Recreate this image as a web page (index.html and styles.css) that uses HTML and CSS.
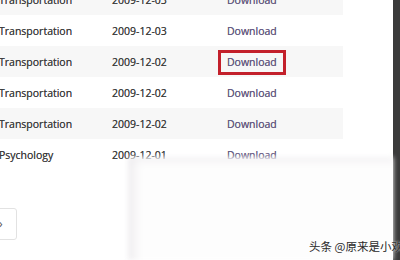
FILE: index.html
```html
<!DOCTYPE html>
<html>
<head>
<meta charset="utf-8">
<link rel="stylesheet" href="styles.css">
</head>
<body>
<div class="page">
  <div class="main">
    <table class="list">
      <tr class="alt"><td class="c1">Transportation</td><td class="c2">2009-12-03</td><td class="c3"><a>Download</a></td></tr>
      <tr><td class="c1">Transportation</td><td class="c2">2009-12-03</td><td class="c3"><a>Download</a></td></tr>
      <tr class="alt"><td class="c1">Transportation</td><td class="c2">2009-12-02</td><td class="c3"><a class="hl">Download</a></td></tr>
      <tr><td class="c1">Transportation</td><td class="c2">2009-12-02</td><td class="c3"><a>Download</a></td></tr>
      <tr class="alt"><td class="c1">Transportation</td><td class="c2">2009-12-02</td><td class="c3"><a>Download</a></td></tr>
      <tr><td class="c1">Psychology</td><td class="c2">2009-12-01</td><td class="c3"><a>Download</a></td></tr>
    </table>
    <div class="pager"><span class="pbtn">›</span></div>
  </div>
  <div class="sidebar"></div>
</div>
<div class="smudge"></div>
<div class="mark">头条 @原来是小欢</div>
</body>
</html>
```
FILE: styles.css
```css
html, body {
  margin: 0;
  padding: 0;
  width: 400px;
  height: 260px;
  overflow: hidden;
  background: #fff;
  font-family: "Open Sans", "Noto Sans", sans-serif;
}
.page {
  display: flex;
  height: 260px;
}
.main {
  flex: 1;
  margin-top: -16px;
  overflow: hidden;
}
.sidebar {
  width: 7px;
  background: #3b3b3b;
}
.list {
  border-collapse: collapse;
  width: 344px;
  margin-left: -1px;
  font-size: 10.5px;
  color: #3a3a3a;
  text-shadow: 0 0 0.3px #666;
}
.list td {
  height: 31px;
  padding: 0;
  vertical-align: middle;
}
.list tr.alt td {
  background: #f7f7f7;
}
.c1 { width: 113px; }
.c2 { width: 115px; }
.c3 a {
  color: #67598a;
}
.c3 a.hl {
  display: inline-block;
  padding: 2px 6px 3px 6px;
  margin: -5px -9px -6px -9px;
  border: 3px solid #c3202b;
}
.pager {
  margin-top: 38px;
  margin-left: -14px;
}
.pbtn {
  display: inline-block;
  box-sizing: border-box;
  width: 31px;
  height: 32px;
  padding-left: 12px;
  border: 1px solid #e2e2e2;
  border-radius: 3px;
  color: #555;
  font-size: 12px;
  line-height: 30px;
}
.smudge {
  position: absolute;
  left: 128px;
  top: 157px;
  width: 265px;
  height: 103px;
  background: #fdfdfd;
  box-shadow: inset 12px 8px 10px -6px rgba(120,110,130,0.12);
  filter: blur(2.5px);
}
.mark {
  position: absolute;
  left: 309px;
  top: 238px;
  font-family: "Noto Sans CJK SC", sans-serif;
  font-size: 11.5px;
  color: #2a2a2a;
  white-space: nowrap;
  text-shadow: 0 0 2px #fff;
}
```
